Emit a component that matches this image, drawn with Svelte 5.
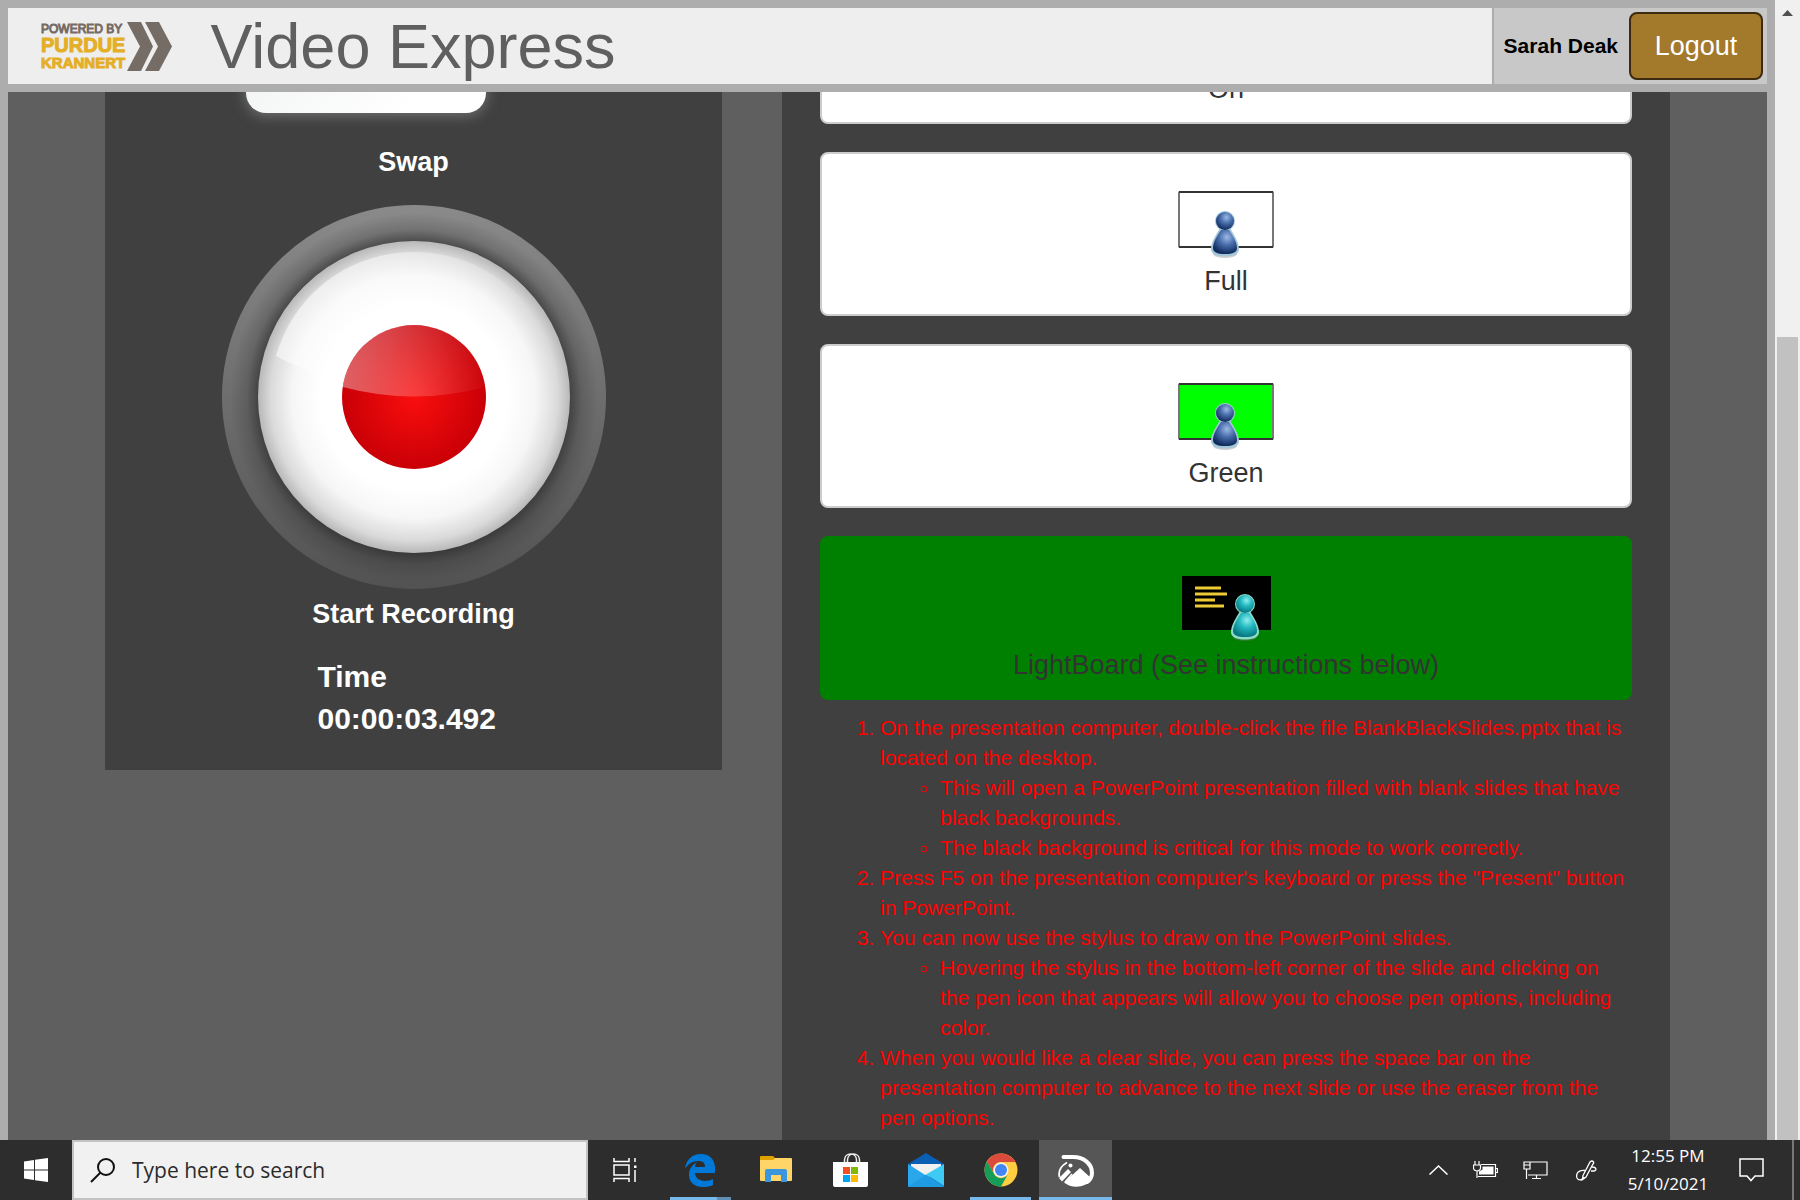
<script>
  let query = $state('');

  const modes = [
    { name: 'On', icon: 'full' },
    { name: 'Full', icon: 'full' },
    { name: 'Green', icon: 'green' },
    { name: 'LightBoard (See instructions below)', icon: 'board', active: true }
  ];

  const steps = [
    {
      text: 'On the presentation computer, double-click the file BlankBlackSlides.pptx that is located on the desktop.',
      notes: [
        'This will open a PowerPoint presentation filled with blank slides that have black backgrounds.',
        'The black background is critical for this mode to work correctly.'
      ]
    },
    {
      text: 'Press F5 on the presentation computer\'s keyboard or press the "Present" button in PowerPoint.',
      notes: []
    },
    {
      text: 'You can now use the stylus to draw on the PowerPoint slides.',
      notes: [
        'Hovering the stylus in the bottom-left corner of the slide and clicking on the pen icon that appears will allow you to choose pen options, including color.'
      ]
    },
    {
      text: 'When you would like a clear slide, you can press the space bar on the presentation computer to advance to the next slide or use the eraser from the pen options.',
      notes: []
    }
  ];
</script>

<svg class="defs" width="0" height="0" aria-hidden="true">
  <defs>
    <radialGradient id="blueBody" cx="58%" cy="30%" r="70%">
      <stop offset="0" stop-color="#9db9e6" /><stop offset=".45" stop-color="#4a70ad" /><stop offset="1" stop-color="#0f2a5c" />
    </radialGradient>
    <radialGradient id="tealBody" cx="58%" cy="30%" r="70%">
      <stop offset="0" stop-color="#8df0f0" /><stop offset=".45" stop-color="#25b8c0" /><stop offset="1" stop-color="#067780" />
    </radialGradient>
  </defs>
</svg>

{#snippet person(fill, rim)}
  <ellipse cx="14" cy="43" rx="12" ry="4" fill="#777" opacity=".35" />
  <path d="M9 17C5 24 0 31 0 38c0 5 5 7.500 14 7.500S28 43 28 38c0-7-5-14-9-21z" fill={rim} />
  <circle cx="14" cy="10" r="10" fill={rim} />
  <path d="M10 19C6 25 2 31 2 37c0 4 4 6 12 6s12-2 12-6c0-6-4-12-8-18z" fill="url(#{fill})" />
  <circle cx="14" cy="10" r="9" fill="url(#{fill})" />
{/snippet}

<div class="screen">
  <div class="browser">
    <div class="page">
      <header>
        <div class="brand">
          <div class="logo">
            <div class="logo-text">
              <span class="powered">POWERED BY</span>
              <span class="purdue">PURDUE</span>
              <span class="krannert">KRANNERT</span>
            </div>
            <svg width="45" height="49" viewBox="0 0 45 49" aria-hidden="true">
              <path d="M0 0h14l12 24.500L14 49H0l13-24.500zM18 0h14l13 24.500L32 49H18l13-24.500z" fill="#766c66" />
            </svg>
          </div>
          <h1>Video Express</h1>
        </div>
        <div class="user">
          <strong>Sarah Deak</strong>
          <button class="logout">Logout</button>
        </div>
      </header>

      <main>
        <div class="columns">
          <section class="recorder">
            <button class="swap" aria-label="Swap sources"></button>
            <h2 class="swap-label">Swap</h2>
            <button class="record" aria-label="Start Recording">
              <svg width="384" height="384" viewBox="0 0 384 384" aria-hidden="true">
                <defs>
                  <linearGradient id="ring" x1="0" y1="0" x2="0" y2="1">
                    <stop offset="0" stop-color="#8a8a8a" /><stop offset="1" stop-color="#525252" />
                  </linearGradient>
                  <radialGradient id="shade" gradientUnits="userSpaceOnUse" cx="192" cy="192" r="184">
                    <stop offset=".84" stop-color="#222" stop-opacity=".6" /><stop offset=".91" stop-color="#222" stop-opacity=".2" /><stop offset="1" stop-color="#222" stop-opacity="0" />
                  </radialGradient>
                  <radialGradient id="white">
                    <stop offset=".6" stop-color="#fff" /><stop offset=".78" stop-color="#f6f6f6" /><stop offset=".92" stop-color="#dadada" /><stop offset="1" stop-color="#b8b8b8" />
                  </radialGradient>
                  <radialGradient id="red">
                    <stop offset="0" stop-color="#fa0e0e" /><stop offset="1" stop-color="#c90006" />
                  </radialGradient>
                  <linearGradient id="gloss" x1="0" y1=".5" x2="1" y2=".5">
                    <stop offset="0" stop-color="#fff" stop-opacity=".38" /><stop offset="1" stop-color="#fff" stop-opacity=".02" />
                  </linearGradient>
                  <linearGradient id="sheen" x1="0" y1="0" x2="1" y2=".3">
                    <stop offset="0" stop-color="#fff" stop-opacity=".7" /><stop offset="1" stop-color="#fff" stop-opacity="0" />
                  </linearGradient>
                </defs>
                <circle cx="192" cy="192" r="192" fill="url(#ring)" />
                <circle cx="192" cy="192" r="184" fill="url(#shade)" />
                <circle cx="192" cy="192" r="156" fill="url(#white)" />
                <path d="M54 151C72 88 128 47 192 47c60 0 112 36 134 88-60 50-190 60-272 16z" fill="url(#sheen)" />
                <circle cx="192" cy="192" r="72" fill="url(#red)" />
                <path d="M120.700 182A72 72 0 0 1 263.300 182Q192 201 120.700 182z" fill="url(#gloss)" />
              </svg>
            </button>
            <h2 class="record-label">Start Recording</h2>
            <div class="timer">
              <span>Time</span>
              <span>00:00:03.492</span>
            </div>
          </section>

          <section class="modes">
            <div class="cards">
              {#each modes as mode}
                <button class="card" class:active={mode.active}>
                  <svg width="100" height="72" viewBox="0 0 100 72" aria-hidden="true">
                    {#if mode.icon === 'board'}
                      <rect x="6" y="3" width="89" height="54" fill="#000" />
                      <path d="M19 15h26M19 21h32M19 27h20M19 33h29" stroke="#edcb35" stroke-width="3" />
                      <g transform="translate(55 21)">{@render person('tealBody', '#8edcc8')}</g>
                    {:else}
                      <rect x="3" y="3" width="94" height="55" rx="1" fill={mode.icon === 'green' ? '#0f0' : '#fff'} stroke="#777" stroke-width="2" />
                      <path d="M3 3h94M3 58h94" stroke="#333" stroke-width="2" />
                      <g transform="translate(35 22)">{@render person('blueBody', '#a3c6d8')}</g>
                    {/if}
                  </svg>
                  <span>{mode.name}</span>
                </button>
              {/each}
            </div>
            <ol>
              {#each steps as step}
                <li>
                  {step.text}
                  {#if step.notes.length}
                    <ul>
                      {#each step.notes as note}<li>{note}</li>{/each}
                    </ul>
                  {/if}
                </li>
              {/each}
            </ol>
          </section>
        </div>
      </main>
    </div>

    <div class="scrollbar">
      <svg width="25" height="25" viewBox="0 0 25 25" aria-hidden="true"><path d="M7 16l5.500-6 5.500 6z" fill="#505050" /></svg>
      <div class="track"><div class="thumb"></div></div>
    </div>
  </div>

  <footer>
    <button class="start" aria-label="Start">
      <svg width="24" height="24" viewBox="0 0 24 24"><path d="M0 3.500l10-1.500v9.500H0zM11 1.800L24 0v11.500H11zM0 12.500h10V22L0 20.500zM11 12.500h13V24l-13-1.800z" fill="#fff" /></svg>
    </button>
    <label class="search">
      <svg width="25" height="25" viewBox="0 0 25 25" fill="none" stroke="#111" stroke-width="2" aria-hidden="true"><circle cx="16" cy="9" r="8" /><path d="M10.500 14.500L1 24" /></svg>
      <input type="text" placeholder="Type here to search" aria-label="Type here to search" bind:value={query} />
    </label>
    <nav>
      <button class="app first" aria-label="Task View">
        <svg width="24" height="24" viewBox="0 0 24 24" fill="none" stroke="#fff" stroke-width="1.500"><path d="M1 0v3.500h15V0M1 24v-3.500h15V24M1 7h15v10H1zM22 0v4M22 12v12" /><rect x="21" y="7.500" width="2.500" height="2.500" fill="#fff" stroke="none" /></svg>
      </button>
      <button class="app" aria-label="Edge">
        <svg width="31" height="33" viewBox="0 0 31 33"><path d="M0 15C1 6 7 0 16 0c9 0 14 6 14 14v5H10c0 5 5 8 10 8 3 0 6-1 8-2v6c-3 1.500-6 2-10 2C8 33 4 27 4 21c0-6 3-10 8-13-2 2-2 4-2 5h10c0-4-2-6-7-6C7 7 3 10 0 15z" fill="#0078d7" /></svg>
        <i class="underline stacked"></i>
      </button>
      <button class="app" aria-label="File Explorer">
        <svg width="32" height="28" viewBox="0 0 32 28"><path d="M0 1q0-1 1-1h12l2 2v4H0z" fill="#dfa000" /><path d="M0 4h13l2-2h16q1 0 1 1v21q0 1-1 1H1q-1 0-1-1z" fill="#ffd567" /><path d="M5 26V15q0-2 2-2h18q2 0 2 2v11h-6v-7H11v7z" fill="#3a96dd" /></svg>
      </button>
      <button class="app" aria-label="Store">
        <svg width="35" height="34" viewBox="0 0 35 34"><path d="M11.500 10V7c0-8 12-8 12 0v3M14.500 10V7c0-8 12-8 12 0v3" fill="none" stroke="#eee" stroke-width="1.500" /><path d="M0 9h35v23q0 2-2 2H2q-2 0-2-2z" fill="#fff" /><path d="M10 14h7v7h-7z" fill="#f25022" /><path d="M18 14h7v7h-7z" fill="#7fba00" /><path d="M10 22h7v7h-7z" fill="#00a4ef" /><path d="M18 22h7v7h-7z" fill="#ffb900" /></svg>
      </button>
      <button class="app" aria-label="Mail">
        <svg width="36" height="34" viewBox="0 0 36 34"><path d="M0 11L18 0l18 11v5H0z" fill="#0a5fb4" /><path d="M3 11h30v4L18 26 3 15z" fill="#f0f0f0" /><path d="M0 11l18 11.500V34H1q-1 0-1-1z" fill="#28a8ea" /><path d="M36 11v22L18 21.500z" fill="#3dcbf5" /><path d="M0 34h35q1 0 1-1L18 21.500z" fill="#1f9be4" /></svg>
      </button>
      <button class="app" aria-label="Chrome">
        <svg width="34" height="34" viewBox="0 0 34 34"><circle cx="17" cy="17" r="16.500" fill="#ffcd40" /><path d="M3 8.500A16.500 16.500 0 0 1 31.500 9H17a8 8 0 0 0-7 12z" fill="#db4a3c" /><path d="M3 8.500L10 21a8 8 0 0 0 14 0l-7 12.500A16.500 16.500 0 0 1 3 8.500z" fill="#139d58" /><circle cx="17" cy="17" r="7.500" fill="#f2f2f2" /><circle cx="17" cy="17" r="6" fill="#4285f4" /></svg>
        <i class="underline"></i>
      </button>
      <button class="app current" aria-label="Snip">
        <svg width="36" height="33" viewBox="0 0 36 33"><path d="M5.500 3H15C26 3 34 10 34 19c0 4-2 7-5 9" fill="none" stroke="#fff" stroke-width="4" stroke-linecap="round" /><path d="M9 8.500C3 12 0 17 1.500 23" fill="none" stroke="#fff" stroke-width="1.800" /><path d="M1 24l9-9 3 3-9 9.500zM6 28.500L22 14l12 11c-6 9-20 10-28 3.500z" fill="#fff" /><path d="M7 28l7-8" stroke="#fff" stroke-width="1.500" /><circle cx="12.500" cy="11.500" r="2" fill="#fff" /></svg>
        <i class="underline wide"></i>
      </button>
    </nav>
    <div class="tray">
      <div class="status">
        <svg width="19" height="10" viewBox="0 0 19 10" fill="none" stroke="#fff" stroke-width="1.500"><path d="M.5 9.500l9-8.500 9 8.500" /></svg>
        <svg width="25" height="18" viewBox="0 0 25 18" fill="none" stroke="#fff" stroke-width="1.200"><path d="M8 3.500h14.500v12H5M23 7.500h1.500v4H23" /><path d="M9.500 5.500h11v8H6v-3l3.500-2z" fill="#fff" stroke="none" /><path d="M2 0v4M6 0v4M.5 4h7v3q0 2.500-3.500 3Q.5 9.500.5 7zM4 10v7" /></svg>
        <svg width="25" height="19" viewBox="0 0 25 19" fill="none" stroke="#fff" stroke-width="1.200"><path d="M7 1h17v13H5M13.500 14v3.500M9 17.500h9M1 1h6v7H1zM3.500 8v10M1 4h6" /></svg>
      </div>
      <svg width="21" height="21" viewBox="0 0 21 21" fill="none" stroke="#fff" stroke-width="1.300"><path d="M7 15.500L14 2q2-2 3.500 0 .5 1-.5 2L10 17l-3.500 2.500zM9 10.500C3 9.500-.500 13 1 18c2 3.500 6 1.500 7-1M16 7c4.500 0 5 3.500 2 4h-3" /></svg>
      <div class="clock"><span>12:55 PM</span><span>5/10/2021</span></div>
      <svg width="25" height="24" viewBox="0 0 25 24" fill="none" stroke="#fff" stroke-width="1.500"><path d="M1 1h23v17h-8l-4 4.500L8 18H1z" /></svg>
      <div class="show-desktop"></div>
    </div>
  </footer>
</div>

<style>
  :global(body) { margin: 0; }
  * { box-sizing: border-box; }
  button { margin: 0; padding: 0; border: 0; background: none; font: inherit; color: inherit; }
  svg { display: block; flex: none; }
  .defs { position: absolute; }
  .screen {
    display: flex; flex-direction: column; height: 100vh; overflow: hidden;
    font-family: "Liberation Sans", Arial, sans-serif;
  }
  .browser { flex: 1; display: flex; min-height: 0; }
  .page { flex: 1; display: flex; flex-direction: column; min-width: 0; padding: 8px 8px 0; background: #adadad; }

  header { display: flex; gap: 2px; padding-bottom: 8px; }
  .brand { flex: 1; display: flex; align-items: center; gap: 38px; height: 76px; padding-left: 33px; background: #eee; }
  .logo { display: flex; align-items: center; gap: 2px; }
  .logo-text { display: flex; flex-direction: column; color: #e4ae27; font-weight: bold; }
  .powered { font-size: 12px; line-height: 14px; font-weight: normal; color: #766c66; -webkit-text-stroke: 1px #766c66; }
  .purdue { font-size: 20px; line-height: 19px; -webkit-text-stroke: 1px #e4ae27; }
  .krannert { font-size: 15px; line-height: 16px; -webkit-text-stroke: 1px #e4ae27; }
  h1 { margin: 0; font-size: 63px; line-height: 76px; font-weight: normal; color: #5f5f5f; }
  .user { display: flex; align-items: center; gap: 11px; padding: 0 4px 0 10px; background: #c8c8c8; }
  .user strong { font-size: 21px; line-height: 24px; }
  .logout { width: 134px; height: 68px; border: 2px solid #3d2a10; border-radius: 8px; background: #a3792b; color: #fff; font-size: 27px; }

  main { flex: 1; min-height: 0; overflow: hidden; background: #5f5f5f; }
  .columns {
    display: grid; grid-template-columns: minmax(0, 617fr) minmax(0, 888fr); align-items: start; gap: 60px;
    margin-top: -132px; padding: 0 97px;
  }
  .recorder, .modes { background: #404040; }
  .recorder { display: flex; flex-direction: column; align-items: center; padding-bottom: 30px; color: #fff; }
  .swap { width: 240px; height: 153px; margin-right: 96px; border-radius: 20px; background: linear-gradient(135deg, #eceeee, #fff 80%); box-shadow: 0 2px 14px #777; }
  h2 { margin: 0; font-size: 27px; line-height: 40px; }
  .swap-label { margin-top: 29px; }
  .record { margin-top: 23px; border-radius: 50%; }
  .record-label { margin-top: 5px; }
  .timer { display: flex; flex-direction: column; width: 192px; margin-top: 22px; font-size: 30px; line-height: 42px; font-weight: bold; }

  .modes { padding: 0 38px 20px; }
  .cards { display: flex; flex-direction: column; gap: 28px; }
  .card {
    display: flex; flex-direction: column; align-items: center; height: 164px; padding-top: 35px;
    border: 2px solid #ccc; border-radius: 8px; background: #fff; color: #333; font-size: 27px; line-height: 40px;
  }
  .card.active { border-color: green; background: green; }
  ol { margin: 13px 0 0; padding-left: 60px; color: red; font-size: 21px; line-height: 30px; }
  ul { margin: 0; padding-left: 60px; list-style: circle; }

  .scrollbar { display: flex; flex-direction: column; width: 25px; background: #f0f0f0; }
  .track { flex: 1; display: flex; flex-direction: column; justify-content: flex-end; padding: 0 2px; }
  .thumb { height: 72%; background: #c1c1c1; }

  footer { display: flex; height: 60px; background: #2d2d2d; color: #fff; font-family: "Open Sans", "Noto Sans", sans-serif; }
  .start { display: grid; place-items: center; width: 72px; }
  .search { display: flex; align-items: center; gap: 17px; width: 516px; padding: 0 16px; border: 2px solid #c3c3c3; background: #f1f1f1; }
  .search input { flex: 1; min-width: 0; padding: 0; border: 0; outline: 0; background: none; font: 21px/30px "Open Sans", "Noto Sans", sans-serif; color: #2b2b2b; }
  .search input::placeholder { color: #2b2b2b; opacity: 1; }
  nav { display: flex; gap: 2px; }
  .app { position: relative; display: grid; place-items: center; width: 73px; height: 60px; }
  .app.current { background: #565656; }
  .app.first { width: 74px; }
  .underline { position: absolute; bottom: 0; left: 6px; right: 6px; height: 3px; background: #76b9ed; }
  .underline.stacked { background: linear-gradient(90deg, #76b9ed 77%, #5f8fb4 77%); }
  .underline.wide { left: 0; right: 0; }
  .tray { display: flex; align-items: center; margin-left: auto; gap: 28px; }
  .status { display: flex; align-items: center; gap: 25px; }
  .clock { display: flex; flex-direction: column; width: 86px; text-align: center; font-size: 17px; line-height: 28px; }
  .show-desktop { width: 8px; height: 60px; border-left: 2px solid #777; }
</style>
